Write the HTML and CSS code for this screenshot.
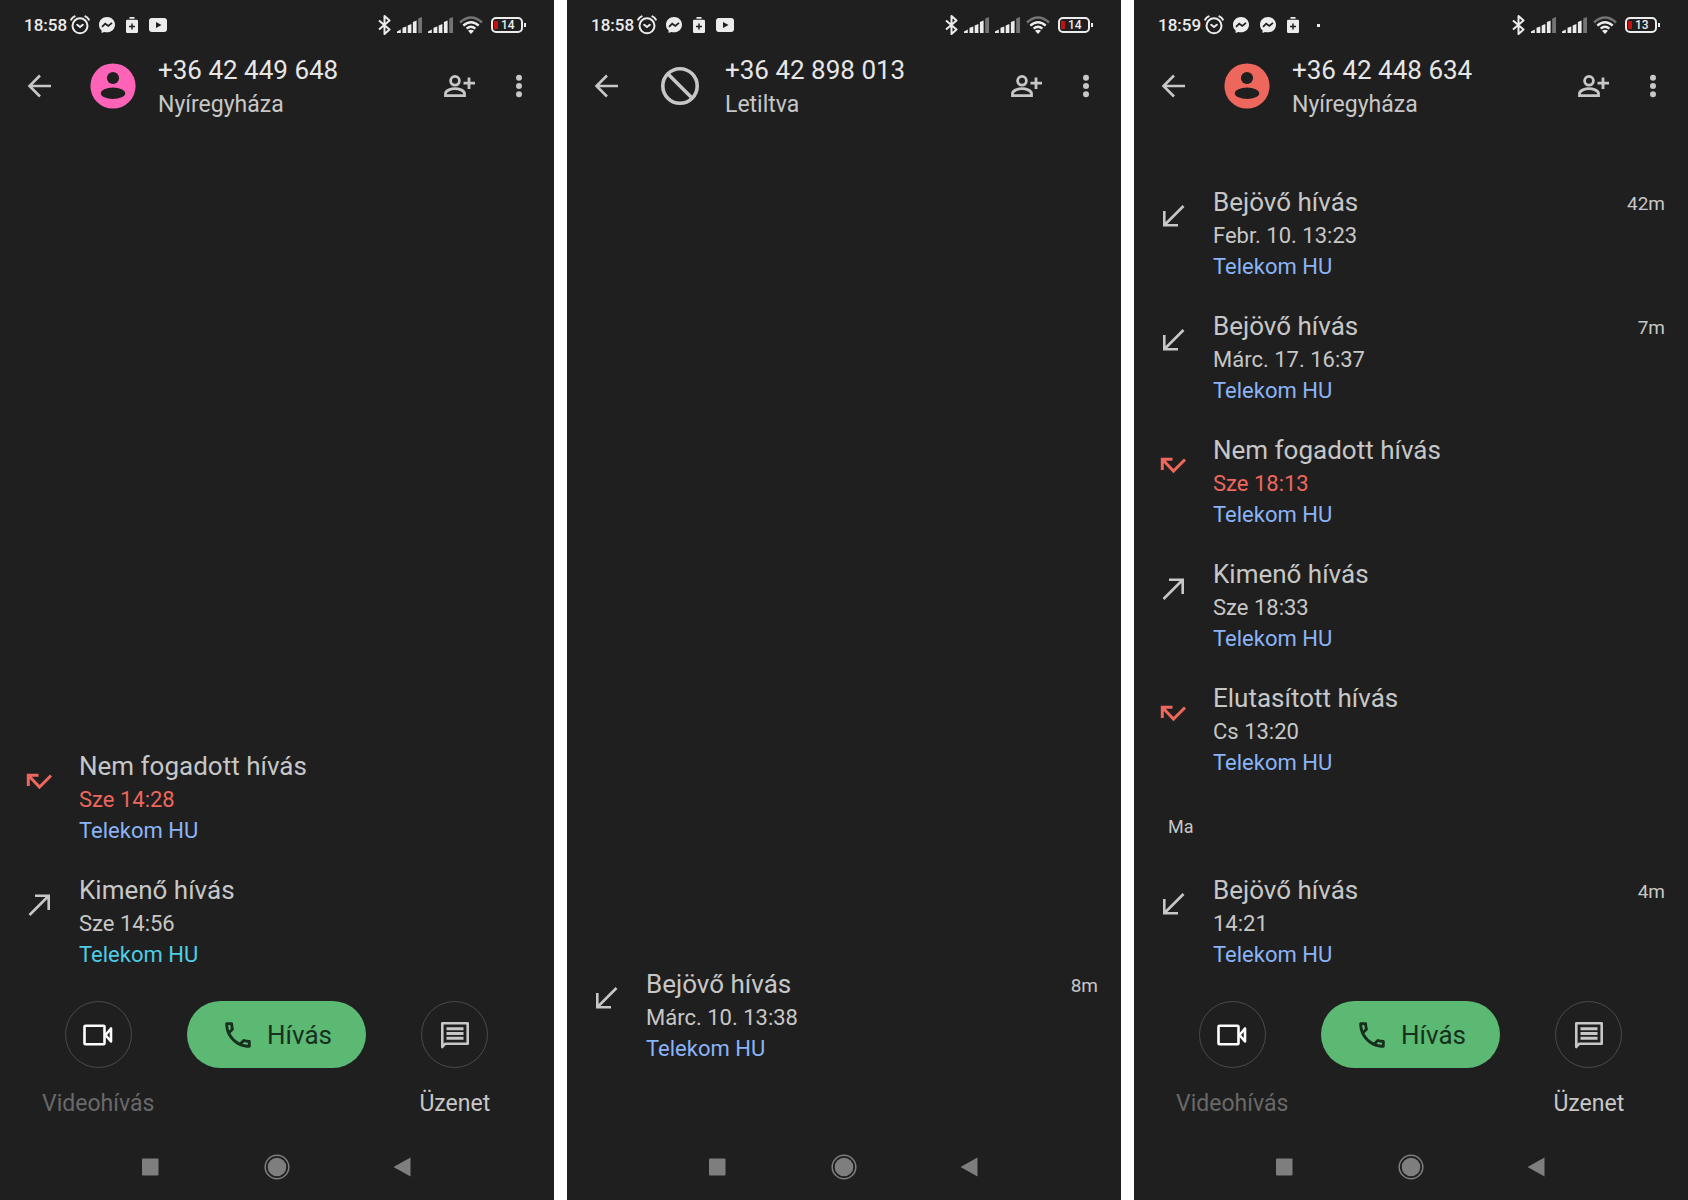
FILE: index.html
```html
<!DOCTYPE html>
<html lang="hu">
<head>
  <meta charset="UTF-8">
  <meta name="viewport" content="width=device-width, initial-scale=1">
  <title>Hívásnapló</title>
  <link rel="stylesheet" href="styles.css">
</head>
<body>

<!-- shared icons -->
<svg class="icon-defs" aria-hidden="true">
  <symbol id="alarm" viewBox="0 0 20 20">
    <g fill="none" stroke="currentColor" stroke-width="2" stroke-linecap="round">
      <circle cx="10" cy="10.8" r="7.5"/>
      <path d="M1.2 4.6Q2.4 2.4 4.6 1.4M18.8 4.6Q17.6 2.4 15.4 1.4M7.2 9.8L10 12l2.8-2.2"/>
    </g>
  </symbol>
  <symbol id="messenger" viewBox="0 0 16 16">
    <path fill="currentColor" d="M8 0C3.500 0 0 3.300 0 7.700c0 2.300.9 4.200 2.500 5.600L2.600 16l2.600-1.100c.9.300 1.800.400 2.800.400 4.500 0 8-3.200 8-7.600S12.500 0 8 0z"/>
    <path fill="none" stroke="#1f1f1f" stroke-width="1.700" d="M3 9.900L6.200 6.700 9.300 9 13 5.800"/>
  </symbol>
  <symbol id="saver" viewBox="0 0 12 16">
    <path fill="currentColor" d="M3.500 0h5v1.700h-5zM1.300 2.700h9.400Q12 2.700 12 4v10.700Q12 16 10.700 16H1.300Q0 16 0 14.700V4Q0 2.700 1.300 2.700z"/>
    <path stroke="#1f1f1f" stroke-width="1.500" d="M6 6.500v6M3 9.500h6"/>
  </symbol>
  <symbol id="youtube" viewBox="0 0 18 14">
    <rect width="18" height="14" rx="3" fill="currentColor"/>
    <path fill="#1f1f1f" d="M7 4l5.500 3L7 10z"/>
  </symbol>
  <symbol id="bluetooth" viewBox="0 0 13 20">
    <path fill="none" stroke="currentColor" stroke-width="2" stroke-linejoin="round" d="M1 5.500l10.500 9L6.500 19V1l5 4.500L1 14.500"/>
  </symbol>
  <symbol id="signal" viewBox="0 0 25 16">
    <path fill="currentColor" d="M0 16v-1.500L3.800 12.500V16zM5.500 10.800l3.800-1.300V16H5.500zM10.700 8.500l3.700-1.500v9h-3.700zM15.900 5l3.700-1.500V16h-3.700z"/>
    <path fill="#747474" d="M21.200 1.500L25 0v16h-3.800z"/>
  </symbol>
  <symbol id="wifi" viewBox="0 0 24 18">
    <g fill="none" stroke="currentColor" stroke-width="2.400">
      <path stroke="#747474" d="M1 6.500Q12-3.500 23 6.500"/>
      <path d="M4.300 9.600Q12 2.800 19.700 9.600M7.600 12.700Q12 9 16.400 12.700"/>
    </g>
    <path fill="currentColor" d="M9 14.800Q12 12.600 15 14.800L12 18z"/>
  </symbol>
  <symbol id="back" viewBox="0 0 28 28">
    <path fill="none" stroke="currentColor" stroke-width="2.600" d="M26 14H5M15 3.500L4.500 14 15 24.500"/>
  </symbol>
  <symbol id="person" viewBox="0 0 46 46">
    <circle cx="23" cy="23" r="22.600" fill="currentColor"/>
    <circle cx="23" cy="15" r="6.100" fill="#1f1f1f"/>
    <ellipse cx="23" cy="30.300" rx="12.200" ry="5.700" fill="#1f1f1f"/>
  </symbol>
  <symbol id="blocked" viewBox="0 0 46 46">
    <g fill="none" stroke="currentColor" stroke-width="3.600">
      <circle cx="23" cy="23" r="17.200"/>
      <path d="M11 11l24 24"/>
    </g>
  </symbol>
  <symbol id="add-person" viewBox="0 0 32 24">
    <g fill="none" stroke="currentColor" stroke-width="2.800">
      <circle cx="11" cy="6.800" r="4.400"/>
      <path d="M1.500 21.600v-2c0-3.200 6-5 9.500-5s9.500 1.800 9.500 5v2zM25 3.500v11.500M19.500 9.200H31"/>
    </g>
  </symbol>
  <symbol id="more" viewBox="0 0 8 24">
    <g fill="currentColor"><circle cx="4" cy="3.800" r="3"/><circle cx="4" cy="12" r="3"/><circle cx="4" cy="20.300" r="3"/></g>
  </symbol>
  <symbol id="incoming" viewBox="0 0 28 28">
    <path fill="none" stroke="currentColor" stroke-width="2.600" d="M24.500 3L6 21.500M5.300 8v14.300H19"/>
  </symbol>
  <symbol id="outgoing" viewBox="0 0 28 28">
    <path fill="none" stroke="currentColor" stroke-width="2.600" d="M4.500 24L23 5.500M10 4.800h13.700V19"/>
  </symbol>
  <symbol id="missed" viewBox="0 0 28 28">
    <path fill="none" stroke="currentColor" stroke-width="3" d="M3.300 19V8.300H13.500M4 9l10.500 11L26 8.500"/>
  </symbol>
  <symbol id="video" viewBox="0 0 30 22">
    <g fill="none" stroke="currentColor" stroke-width="2.600" stroke-linejoin="round">
      <rect x="1.500" y="1.800" width="20" height="18.400" rx="1"/>
      <path d="M28 4.500v13L22.500 11z"/>
    </g>
  </symbol>
  <symbol id="message" viewBox="0 0 30 30">
    <path fill="none" stroke="currentColor" stroke-width="2.600" stroke-linejoin="round" d="M2.300 27V3.300H27.700V23.700H5.300z"/>
    <path stroke="currentColor" stroke-width="3" d="M6.500 8.800h17M6.500 13.500h17M6.500 18.200h17"/>
  </symbol>
  <symbol id="call" viewBox="0 0 24 24">
    <path fill="currentColor" d="M6.540 5c.06.89.21 1.760.45 2.590l-1.200 1.200c-.41-1.200-.67-2.470-.76-3.790h1.510m9.860 12.020c.85.24 1.720.39 2.600.45v1.490c-1.320-.09-2.590-.35-3.800-.75l1.200-1.190M7.500 3H4c-.55 0-1 .45-1 1 0 9.390 7.610 17 17 17 .55 0 1-.45 1-1v-3.490c0-.55-.45-1-1-1-1.240 0-2.450-.2-3.570-.57-.1-.04-.21-.05-.31-.05-.26 0-.51.1-.71.29l-2.200 2.200c-2.830-1.450-5.150-3.760-6.590-6.590l2.200-2.200c.28-.28.36-.67.25-1.020C8.700 6.450 8.500 5.250 8.500 4c0-.55-.45-1-1-1z"/>
  </symbol>
  <symbol id="nav-recent" viewBox="0 0 26 26">
    <rect x="4" y="4.500" width="16.500" height="17" rx="1" fill="currentColor"/>
  </symbol>
  <symbol id="nav-home" viewBox="0 0 26 26">
    <circle cx="13" cy="13" r="9.300" fill="currentColor"/>
    <circle cx="13" cy="13" r="11.800" fill="none" stroke="currentColor" stroke-width="1.500"/>
  </symbol>
  <symbol id="nav-back" viewBox="0 0 26 26">
    <path fill="currentColor" d="M20.500 3.500v19L3.500 13z"/>
  </symbol>
</svg>

<main class="screens">

  <section class="phone">
    <div class="status-bar">
      <span class="time">18:58</span>
      <svg class="i-alarm"><use href="#alarm"/></svg>
      <div class="notifications">
        <svg class="i-messenger"><use href="#messenger"/></svg>
        <svg class="i-saver"><use href="#saver"/></svg>
        <svg class="i-youtube"><use href="#youtube"/></svg>
      </div>
      <div class="system">
        <svg class="i-bluetooth"><use href="#bluetooth"/></svg>
        <svg class="i-signal"><use href="#signal"/></svg>
        <svg class="i-signal"><use href="#signal"/></svg>
        <svg class="i-wifi"><use href="#wifi"/></svg>
        <span class="battery">14</span>
      </div>
    </div>
    <header class="contact">
      <button class="icon-btn" aria-label="Vissza"><svg class="i-28"><use href="#back"/></svg></button>
      <svg class="avatar pink"><use href="#person"/></svg>
      <div class="contact-text">
        <h1>+36 42 449 648</h1>
        <p>Nyíregyháza</p>
      </div>
      <button class="icon-btn" aria-label="Új névjegy"><svg class="i-add"><use href="#add-person"/></svg></button>
      <button class="icon-btn more" aria-label="Továbbiak"><svg class="i-more"><use href="#more"/></svg></button>
    </header>
    <ul class="log">
      <li class="call missed">
        <svg class="i-28"><use href="#missed"/></svg>
        <div class="call-text">
          <h2>Nem fogadott hívás</h2>
          <p class="when">Sze 14:28</p>
          <p class="sim">Telekom HU</p>
        </div>
      </li>
      <li class="call">
        <svg class="i-28"><use href="#outgoing"/></svg>
        <div class="call-text">
          <h2>Kimenő hívás</h2>
          <p class="when">Sze 14:56</p>
          <p class="sim sim-2">Telekom HU</p>
        </div>
      </li>
    </ul>
    <div class="actions">
      <button class="action" disabled>
        <span class="circle"><svg class="i-video"><use href="#video"/></svg></span>
        <span class="label">Videohívás</span>
      </button>
      <button class="call-btn"><svg class="i-call"><use href="#call"/></svg>Hívás</button>
      <button class="action">
        <span class="circle"><svg class="i-message"><use href="#message"/></svg></span>
        <span class="label">Üzenet</span>
      </button>
    </div>
    <nav class="nav-bar">
      <button aria-label="Legutóbbiak"><svg><use href="#nav-recent"/></svg></button>
      <button aria-label="Kezdőképernyő"><svg><use href="#nav-home"/></svg></button>
      <button aria-label="Vissza"><svg><use href="#nav-back"/></svg></button>
    </nav>
  </section>

  <section class="phone">
    <div class="status-bar">
      <span class="time">18:58</span>
      <svg class="i-alarm"><use href="#alarm"/></svg>
      <div class="notifications">
        <svg class="i-messenger"><use href="#messenger"/></svg>
        <svg class="i-saver"><use href="#saver"/></svg>
        <svg class="i-youtube"><use href="#youtube"/></svg>
      </div>
      <div class="system">
        <svg class="i-bluetooth"><use href="#bluetooth"/></svg>
        <svg class="i-signal"><use href="#signal"/></svg>
        <svg class="i-signal"><use href="#signal"/></svg>
        <svg class="i-wifi"><use href="#wifi"/></svg>
        <span class="battery">14</span>
      </div>
    </div>
    <header class="contact">
      <button class="icon-btn" aria-label="Vissza"><svg class="i-28"><use href="#back"/></svg></button>
      <svg class="avatar"><use href="#blocked"/></svg>
      <div class="contact-text">
        <h1>+36 42 898 013</h1>
        <p>Letiltva</p>
      </div>
      <button class="icon-btn" aria-label="Új névjegy"><svg class="i-add"><use href="#add-person"/></svg></button>
      <button class="icon-btn more" aria-label="Továbbiak"><svg class="i-more"><use href="#more"/></svg></button>
    </header>
    <ul class="log log-only">
      <li class="call">
        <svg class="i-28"><use href="#incoming"/></svg>
        <div class="call-text">
          <h2>Bejövő hívás</h2>
          <p class="when">Márc. 10. 13:38</p>
          <p class="sim">Telekom HU</p>
        </div>
        <span class="duration">8m</span>
      </li>
    </ul>
    <nav class="nav-bar">
      <button aria-label="Legutóbbiak"><svg><use href="#nav-recent"/></svg></button>
      <button aria-label="Kezdőképernyő"><svg><use href="#nav-home"/></svg></button>
      <button aria-label="Vissza"><svg><use href="#nav-back"/></svg></button>
    </nav>
  </section>

  <section class="phone">
    <div class="status-bar">
      <span class="time">18:59</span>
      <svg class="i-alarm"><use href="#alarm"/></svg>
      <div class="notifications">
        <svg class="i-messenger"><use href="#messenger"/></svg>
        <svg class="i-messenger"><use href="#messenger"/></svg>
        <svg class="i-saver"><use href="#saver"/></svg>
        <span class="overflow-dot"></span>
      </div>
      <div class="system">
        <svg class="i-bluetooth"><use href="#bluetooth"/></svg>
        <svg class="i-signal"><use href="#signal"/></svg>
        <svg class="i-signal"><use href="#signal"/></svg>
        <svg class="i-wifi"><use href="#wifi"/></svg>
        <span class="battery">13</span>
      </div>
    </div>
    <header class="contact">
      <button class="icon-btn" aria-label="Vissza"><svg class="i-28"><use href="#back"/></svg></button>
      <svg class="avatar coral"><use href="#person"/></svg>
      <div class="contact-text">
        <h1>+36 42 448 634</h1>
        <p>Nyíregyháza</p>
      </div>
      <button class="icon-btn" aria-label="Új névjegy"><svg class="i-add"><use href="#add-person"/></svg></button>
      <button class="icon-btn more" aria-label="Továbbiak"><svg class="i-more"><use href="#more"/></svg></button>
    </header>
    <ul class="log">
      <li class="call">
        <svg class="i-28"><use href="#incoming"/></svg>
        <div class="call-text">
          <h2>Bejövő hívás</h2>
          <p class="when">Febr. 10. 13:23</p>
          <p class="sim">Telekom HU</p>
        </div>
        <span class="duration">42m</span>
      </li>
      <li class="call">
        <svg class="i-28"><use href="#incoming"/></svg>
        <div class="call-text">
          <h2>Bejövő hívás</h2>
          <p class="when">Márc. 17. 16:37</p>
          <p class="sim">Telekom HU</p>
        </div>
        <span class="duration">7m</span>
      </li>
      <li class="call missed">
        <svg class="i-28"><use href="#missed"/></svg>
        <div class="call-text">
          <h2>Nem fogadott hívás</h2>
          <p class="when">Sze 18:13</p>
          <p class="sim">Telekom HU</p>
        </div>
      </li>
      <li class="call">
        <svg class="i-28"><use href="#outgoing"/></svg>
        <div class="call-text">
          <h2>Kimenő hívás</h2>
          <p class="when">Sze 18:33</p>
          <p class="sim">Telekom HU</p>
        </div>
      </li>
      <li class="call rejected">
        <svg class="i-28"><use href="#missed"/></svg>
        <div class="call-text">
          <h2>Elutasított hívás</h2>
          <p class="when">Cs 13:20</p>
          <p class="sim">Telekom HU</p>
        </div>
      </li>
      <li class="day">Ma</li>
      <li class="call">
        <svg class="i-28"><use href="#incoming"/></svg>
        <div class="call-text">
          <h2>Bejövő hívás</h2>
          <p class="when">14:21</p>
          <p class="sim">Telekom HU</p>
        </div>
        <span class="duration">4m</span>
      </li>
    </ul>
    <div class="actions">
      <button class="action" disabled>
        <span class="circle"><svg class="i-video"><use href="#video"/></svg></span>
        <span class="label">Videohívás</span>
      </button>
      <button class="call-btn"><svg class="i-call"><use href="#call"/></svg>Hívás</button>
      <button class="action">
        <span class="circle"><svg class="i-message"><use href="#message"/></svg></span>
        <span class="label">Üzenet</span>
      </button>
    </div>
    <nav class="nav-bar">
      <button aria-label="Legutóbbiak"><svg><use href="#nav-recent"/></svg></button>
      <button aria-label="Kezdőképernyő"><svg><use href="#nav-home"/></svg></button>
      <button aria-label="Vissza"><svg><use href="#nav-back"/></svg></button>
    </nav>
  </section>

</main>

</body>
</html>
```
FILE: styles.css
```css
* {
  box-sizing: border-box;
}

body {
  margin: 0;
  background-color: #fff;
  font-family: Roboto, "Noto Sans", sans-serif;
  color: #c7c7c7;
}

h1, h2, p, ul {
  margin: 0;
  padding: 0;
  font-weight: 400;
}

ul {
  list-style: none;
}

button {
  background: none;
  border: none;
  padding: 0;
  font-family: inherit;
  color: inherit;
  cursor: pointer;
}

svg {
  display: block;
  flex: none;
}

.icon-defs {
  display: none;
}

.screens {
  display: grid;
  grid-template-columns: repeat(3, 1fr);
  gap: 13px;
  min-height: 100vh;
}

.phone {
  display: flex;
  flex-direction: column;
  background-color: #1f1f1f;
}

/* status bar */
.status-bar {
  display: flex;
  align-items: center;
  height: 50px;
  padding: 0 31px 0 24px;
  color: #ececec;
}

.time {
  font-size: 17px;
  font-weight: 500;
  margin-right: 3px;
}

.notifications {
  display: flex;
  align-items: center;
  gap: 11px;
  margin-left: 9px;
}

.system {
  display: flex;
  align-items: center;
  gap: 6px;
  margin-left: auto;
}

.battery {
  position: relative;
  width: 32px;
  height: 16px;
  margin-left: 2px;
  padding-left: 8px;
  border: 2px solid #ececec;
  border-radius: 5px;
  font-size: 12px;
  font-weight: 500;
  line-height: 13px;
}

.battery::before {
  content: "";
  position: absolute;
  left: 1px;
  top: 2px;
  width: 4px;
  height: 8px;
  background-color: #c4100f;
}

.battery::after {
  content: "";
  position: absolute;
  right: -5px;
  top: 4px;
  width: 2px;
  height: 4px;
  background-color: #ececec;
}

.overflow-dot {
  width: 3px;
  height: 3px;
  margin-left: 7px;
  background-color: #ececec;
}

.i-alarm { width: 20px; height: 20px; }
.i-messenger { width: 16px; height: 16px; }
.i-saver { width: 12px; height: 16px; }
.i-youtube { width: 18px; height: 14px; }
.i-bluetooth { width: 13px; height: 20px; }
.i-signal { width: 25px; height: 16px; }
.i-wifi { width: 24px; height: 18px; }
.i-28 { width: 28px; height: 28px; }
.i-add { width: 32px; height: 24px; }
.i-more { width: 8px; height: 24px; }
.i-video { width: 30px; height: 22px; }
.i-message { width: 30px; height: 30px; }
.i-call { width: 34px; height: 34px; }

/* contact header */
.contact {
  display: flex;
  align-items: center;
  height: 72px;
  padding: 0 31px 0 25px;
}

.avatar {
  width: 46px;
  height: 46px;
  margin: 0 22px 0 37px;
}

.pink {
  color: #ff63b8;
}

.coral {
  color: #ee675c;
}

.contact-text {
  flex: 1;
}

.contact h1 {
  font-size: 26px;
  line-height: 36px;
  color: #e6e6e6;
}

.contact p {
  font-size: 23px;
  line-height: 33px;
}

.more {
  margin-left: 39px;
}

/* call log */
.log {
  flex: 1;
  display: flex;
  flex-direction: column;
  justify-content: flex-end;
  gap: 26px;
  padding: 0 23px 31px 25px;
}

.log-only {
  padding-bottom: 70px;
}

.call {
  display: flex;
}

.call > svg {
  margin: 19px 26px 0 0;
}

.call-text {
  flex: 1;
}

.call h2 {
  font-size: 26px;
  line-height: 36px;
}

.call p {
  font-size: 22px;
  line-height: 31px;
}

.call .sim {
  color: #8ab4f8;
}

.call .sim-2 {
  color: #4ecde6;
}

.missed > svg,
.rejected > svg,
.missed .when {
  color: #ee675c;
}

.duration {
  font-size: 19px;
  line-height: 40px;
}

.day {
  padding: 4px 0 0 9px;
  font-size: 18px;
  line-height: 38px;
}

/* bottom actions */
.actions {
  display: grid;
  grid-template-columns: repeat(3, 1fr);
  align-items: start;
  padding: 0 10px 16px 9px;
}

.action {
  display: flex;
  flex-direction: column;
  align-items: center;
  gap: 22px;
}

.circle {
  display: flex;
  align-items: center;
  justify-content: center;
  width: 67px;
  height: 67px;
  border: 1px solid #4a4a4a;
  border-radius: 50%;
}

.label {
  font-size: 23px;
  line-height: 28px;
}

.action:disabled .circle {
  color: #fff;
}

.action:disabled .label {
  color: #696969;
}

.call-btn {
  display: flex;
  align-items: center;
  justify-content: center;
  gap: 12px;
  height: 67px;
  border-radius: 34px;
  background-color: #5bb974;
  color: #17301d;
  font-size: 26px;
}

/* system navigation */
.nav-bar {
  display: grid;
  grid-template-columns: repeat(3, 1fr);
  justify-items: center;
  align-items: center;
  height: 66px;
  padding: 0 16%;
  color: #7e7e7e;
}

.nav-bar svg {
  width: 26px;
  height: 26px;
}
```
